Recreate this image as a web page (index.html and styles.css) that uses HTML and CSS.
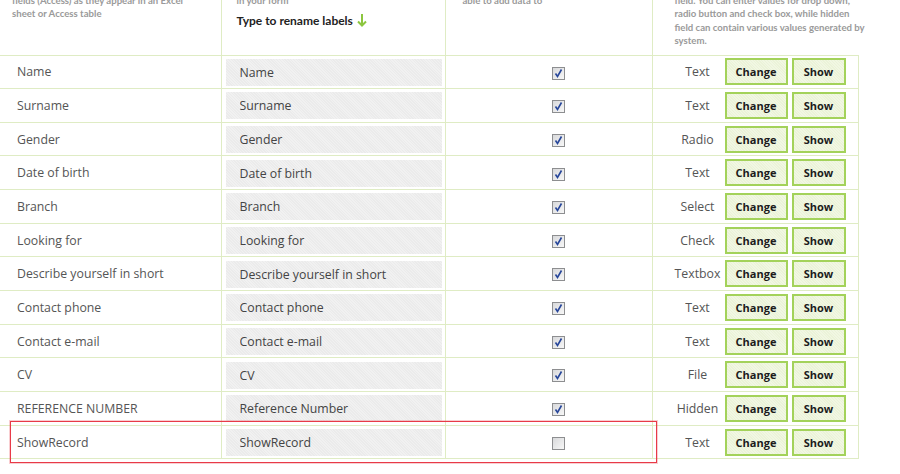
FILE: index.html
```html
<!DOCTYPE html>
<html>
<head>
    <title>Form Fields</title>
    <link rel="stylesheet" href="styles.css">
</head>
<body>
    <div class="fields-wrap">
        <table class="fields">
            <colgroup>
                <col class="col-source">
                <col class="col-label">
                <col class="col-edit">
                <col class="col-type">
            </colgroup>
            <thead>
                <tr>
                    <th class="h-source">Original names of the form<br>fields (Access) as they appear in an Excel<br>sheet or Access table</th>
                    <th class="h-label">Labels that will be shown<br>in your form
                        <div class="rename">Type to rename labels
                            <svg class="arrow" width="10" height="14" viewBox="0 0 10 14"><path d="M5 1 V12 M1 8.5 L5 12.5 L9 8.5" fill="none" stroke="#8cc63f" stroke-width="2"/></svg>
                        </div>
                    </th>
                    <th class="h-edit">Check the fields that users will be<br>able to add data to</th>
                    <th class="h-type">Type of the form<br>field. You can enter values for drop down,<br>radio button and check box, while hidden<br>field can contain various values generated by<br>system.</th>
                </tr>
            </thead>
            <tbody>
                <tr>
                    <td class="source">Name</td>
                    <td class="label"><input type="text" value="Name"></td>
                    <td class="edit"><span class="check"><svg viewBox="0 0 11 11"><path d="M2.5 5.5 L4.5 8.5 L8.5 1.5" fill="none" stroke="#27469a" stroke-width="1.6"/></svg></span></td>
                    <td><div class="type-box"><span class="kind">Text</span><button>Change</button><button class="show">Show</button></div></td>
                </tr>
                <tr>
                    <td class="source">Surname</td>
                    <td class="label"><input type="text" value="Surname"></td>
                    <td class="edit"><span class="check"><svg viewBox="0 0 11 11"><path d="M2.5 5.5 L4.5 8.5 L8.5 1.5" fill="none" stroke="#27469a" stroke-width="1.6"/></svg></span></td>
                    <td><div class="type-box"><span class="kind">Text</span><button>Change</button><button class="show">Show</button></div></td>
                </tr>
                <tr>
                    <td class="source">Gender</td>
                    <td class="label"><input type="text" value="Gender"></td>
                    <td class="edit"><span class="check"><svg viewBox="0 0 11 11"><path d="M2.5 5.5 L4.5 8.5 L8.5 1.5" fill="none" stroke="#27469a" stroke-width="1.6"/></svg></span></td>
                    <td><div class="type-box"><span class="kind">Radio</span><button>Change</button><button class="show">Show</button></div></td>
                </tr>
                <tr>
                    <td class="source">Date of birth</td>
                    <td class="label"><input type="text" value="Date of birth"></td>
                    <td class="edit"><span class="check"><svg viewBox="0 0 11 11"><path d="M2.5 5.5 L4.5 8.5 L8.5 1.5" fill="none" stroke="#27469a" stroke-width="1.6"/></svg></span></td>
                    <td><div class="type-box"><span class="kind">Text</span><button>Change</button><button class="show">Show</button></div></td>
                </tr>
                <tr>
                    <td class="source">Branch</td>
                    <td class="label"><input type="text" value="Branch"></td>
                    <td class="edit"><span class="check"><svg viewBox="0 0 11 11"><path d="M2.5 5.5 L4.5 8.5 L8.5 1.5" fill="none" stroke="#27469a" stroke-width="1.6"/></svg></span></td>
                    <td><div class="type-box"><span class="kind">Select</span><button>Change</button><button class="show">Show</button></div></td>
                </tr>
                <tr>
                    <td class="source">Looking for</td>
                    <td class="label"><input type="text" value="Looking for"></td>
                    <td class="edit"><span class="check"><svg viewBox="0 0 11 11"><path d="M2.5 5.5 L4.5 8.5 L8.5 1.5" fill="none" stroke="#27469a" stroke-width="1.6"/></svg></span></td>
                    <td><div class="type-box"><span class="kind">Check</span><button>Change</button><button class="show">Show</button></div></td>
                </tr>
                <tr>
                    <td class="source">Describe yourself in short</td>
                    <td class="label"><input type="text" value="Describe yourself in short"></td>
                    <td class="edit"><span class="check"><svg viewBox="0 0 11 11"><path d="M2.5 5.5 L4.5 8.5 L8.5 1.5" fill="none" stroke="#27469a" stroke-width="1.6"/></svg></span></td>
                    <td><div class="type-box"><span class="kind">Textbox</span><button>Change</button><button class="show">Show</button></div></td>
                </tr>
                <tr>
                    <td class="source">Contact phone</td>
                    <td class="label"><input type="text" value="Contact phone"></td>
                    <td class="edit"><span class="check"><svg viewBox="0 0 11 11"><path d="M2.5 5.5 L4.5 8.5 L8.5 1.5" fill="none" stroke="#27469a" stroke-width="1.6"/></svg></span></td>
                    <td><div class="type-box"><span class="kind">Text</span><button>Change</button><button class="show">Show</button></div></td>
                </tr>
                <tr>
                    <td class="source">Contact e-mail</td>
                    <td class="label"><input type="text" value="Contact e-mail"></td>
                    <td class="edit"><span class="check"><svg viewBox="0 0 11 11"><path d="M2.5 5.5 L4.5 8.5 L8.5 1.5" fill="none" stroke="#27469a" stroke-width="1.6"/></svg></span></td>
                    <td><div class="type-box"><span class="kind">Text</span><button>Change</button><button class="show">Show</button></div></td>
                </tr>
                <tr>
                    <td class="source">CV</td>
                    <td class="label"><input type="text" value="CV"></td>
                    <td class="edit"><span class="check"><svg viewBox="0 0 11 11"><path d="M2.5 5.5 L4.5 8.5 L8.5 1.5" fill="none" stroke="#27469a" stroke-width="1.6"/></svg></span></td>
                    <td><div class="type-box"><span class="kind">File</span><button>Change</button><button class="show">Show</button></div></td>
                </tr>
                <tr>
                    <td class="source">REFERENCE NUMBER</td>
                    <td class="label"><input type="text" value="Reference Number"></td>
                    <td class="edit"><span class="check"><svg viewBox="0 0 11 11"><path d="M2.5 5.5 L4.5 8.5 L8.5 1.5" fill="none" stroke="#27469a" stroke-width="1.6"/></svg></span></td>
                    <td><div class="type-box"><span class="kind">Hidden</span><button>Change</button><button class="show">Show</button></div></td>
                </tr>
                <tr>
                    <td class="source">ShowRecord</td>
                    <td class="label"><input type="text" value="ShowRecord"></td>
                    <td class="edit"><span class="check"></span></td>
                    <td><div class="type-box"><span class="kind">Text</span><button>Change</button><button class="show">Show</button></div></td>
                </tr>
            </tbody>
        </table>
        <div class="highlight"></div>
    </div>
</body>
</html>
```

FILE: styles.css
```css
body {
    margin: 0;
    font-family: "Open Sans", Arial, sans-serif;
    background-color: #fff;
    color: #555;
}

.fields-wrap {
    position: relative;
    width: 858px;
    margin-top: -28px;
    padding-bottom: 14px;
}

.fields {
    width: 858px;
    border-collapse: collapse;
    table-layout: fixed;
}

.col-source { width: 221px; }
.col-label { width: 224px; }
.col-edit { width: 207px; }
.col-type { width: 206px; }

/* header */
.fields thead tr {
    height: 83px;
}

.fields th {
    padding: 8px 0 0;
    vertical-align: top;
    text-align: left;
    white-space: nowrap;
    font-family: Lato, sans-serif;
    font-size: 9.6px;
    font-weight: bold;
    line-height: 13.6px;
    color: #9a9a9a;
    border-left: 1px solid #dfecc4;
    border-bottom: 1px solid #dfecc4;
}

.fields th:first-child {
    border-left: none;
}

.fields th.h-source { padding-left: 12px; }
.fields th.h-label { padding-left: 15px; }
.fields th.h-edit { padding-left: 17px; }
.fields th.h-type { padding-left: 22px; }

.rename {
    margin-top: 6px;
    font-size: 12px;
    line-height: 16px;
    color: #222;
}

.arrow {
    margin-left: 1px;
    vertical-align: -2px;
}

/* rows */
.fields tbody tr {
    height: 33.67px;
}

.fields td {
    padding: 0;
    border: 1px solid #dfecc4;
    border-right: none;
    font-size: 12.3px;
}

.fields td:first-child {
    border-left: none;
}

.fields td:last-child {
    border-right: 1px solid #dfecc4;
}

.fields td.source {
    padding-left: 17px;
}

.fields td.label {
    padding: 3px 3px 2px 4px;
}

.label input {
    display: block;
    width: 100%;
    height: 27px;
    box-sizing: border-box;
    padding: 0 0 0 14px;
    border: none;
    font-family: "Open Sans", Arial, sans-serif;
    font-size: 12.3px;
    color: #444;
    background: repeating-linear-gradient(45deg, #ebebeb 0 1px, #f1f1f1 1px 2px);
}

.fields td.edit {
    padding-left: 20px;
    text-align: center;
}

.check {
    display: inline-block;
    width: 11px;
    height: 11px;
    border: 1px solid #8d8e90;
    background: linear-gradient(135deg, #d8d9db, #f7f7f7);
    vertical-align: middle;
}

.check svg {
    display: block;
    width: 11px;
    height: 11px;
}

.type-box {
    display: flex;
    align-items: center;
    padding-left: 20px;
}

.kind {
    width: 50px;
    text-align: center;
    white-space: nowrap;
    margin-right: 2px;
}

.type-box button {
    width: 63px;
    height: 27px;
    padding: 0;
    margin-right: 4px;
    font-family: "Open Sans", Arial, sans-serif;
    font-size: 11px;
    font-weight: bold;
    color: #1c1c1c;
    background: repeating-linear-gradient(45deg, #ebf3d8 0 1px, #f1f7e3 1px 2px);
    border: 2px solid #a3d25a;
    cursor: pointer;
}

.type-box button.show {
    width: 54px;
}

.highlight {
    position: absolute;
    left: 10px;
    top: 449px;
    width: 645px;
    height: 40px;
    border: 1px solid #e83a48;
    box-shadow: 0 0 0 1px rgba(232, 58, 72, 0.25);
}
```
